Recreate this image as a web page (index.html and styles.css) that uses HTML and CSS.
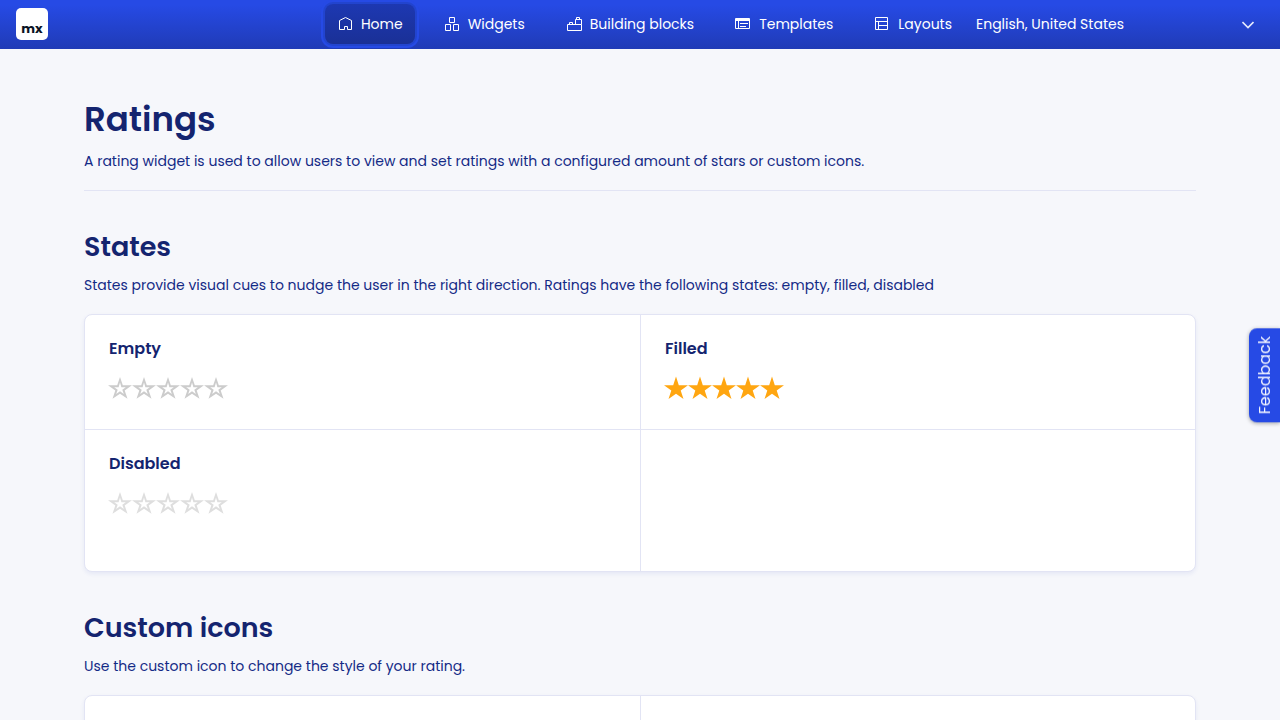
FILE: index.html
```html
<!DOCTYPE html>
<html lang="en">
<head>
<meta charset="utf-8">
<title>Ratings</title>
<link rel="stylesheet" href="styles.css">
</head>
<body>
<svg class="sprite" aria-hidden="true">
  <symbol id="star-empty" viewBox="0 0 24 24"><path fill-rule="evenodd" d="M12 1 L14.8 9.2 H24 L16.7 14.4 L19.5 22.8 L12 17.7 L4.5 22.8 L7.3 14.4 L0 9.2 H9.2 Z M12 6.6 L10.6 11.2 H6.2 L9.7 13.7 L8.2 18 L12 15.3 L15.8 18 L14.3 13.7 L17.8 11.2 H13.4 Z"/></symbol>
  <symbol id="star-full" viewBox="0 0 24 24"><path d="M12 .5 L14.8 9.2 H24 L16.7 14.4 L19.5 23 L12 17.7 L4.5 23 L7.3 14.4 L0 9.2 H9.2 Z"/></symbol>
</svg>
<header class="topbar">
  <a class="logo" href="#" aria-label="Home page"><span class="logo-text">mx</span></a>
  <nav class="menu">
    <a class="menu-link active" href="#"><svg class="icon" viewBox="0 0 16 16"><path d="M2.5 13.5V4.5L8.5 1.5L14.5 4.5V13.5H10.5V10.5H7.5V13.5Z"/></svg>Home</a>
    <a class="menu-link" href="#"><svg class="icon" viewBox="0 0 16 16"><path d="M5.5 1.5H10.5V6.5H5.5ZM1.5 8.5H6.5V14.5H1.5ZM9.5 8.5H14.5V14.5H9.5Z"/></svg>Widgets</a>
    <a class="menu-link" href="#"><svg class="icon" viewBox="0 0 16 16"><path d="M1.5 14.5V8.5H15.5V14.5ZM3.5 8.5V6.5H6.5V8.5M9.5 8.5V3.5H15.5V8.5M10.5 3.5V1.5H13.5V3.5"/></svg>Building blocks</a>
    <a class="menu-link" href="#"><svg class="icon" viewBox="0 0 16 16"><path d="M.5 2.5H14.5V12.5H.5ZM.5 3.5H14.5M.5 4.5H14.5M3.5 4.5V12.5M5 7.5H13M5 10.5H11"/></svg>Templates</a>
    <a class="menu-link" href="#"><svg class="icon" viewBox="0 0 16 16"><path d="M1.5 1.5H13.5V13.5H1.5ZM1.5 5.5H13.5M4.5 5.5V13.5M4.5 9.5H13.5"/></svg>Layouts</a>
  </nav>
  <div class="language">
    <select class="language-select" aria-label="Language"><option>English, United States</option></select>
    <svg class="chevron" viewBox="0 0 12 8"><path d="M.5 1L6 6.5L11.5 1"/></svg>
  </div>
</header>
<main class="page">
  <section class="intro">
    <h1 class="title">Ratings</h1>
    <p class="text">A rating widget is used to allow users to view and set ratings with a configured amount of stars or custom icons.</p>
  </section>
  <section class="section">
    <h2 class="heading">States</h2>
    <p class="text">States provide visual cues to nudge the user in the right direction. Ratings have the following states: empty, filled, disabled</p>
    <div class="card">
      <div class="cell">
        <h3 class="label">Empty</h3>
        <div class="rating" role="group" aria-label="Empty rating">
          <button class="star" aria-label="1 star"><svg><use href="#star-empty"/></svg></button>
          <button class="star" aria-label="2 stars"><svg><use href="#star-empty"/></svg></button>
          <button class="star" aria-label="3 stars"><svg><use href="#star-empty"/></svg></button>
          <button class="star" aria-label="4 stars"><svg><use href="#star-empty"/></svg></button>
          <button class="star" aria-label="5 stars"><svg><use href="#star-empty"/></svg></button>
        </div>
      </div>
      <div class="cell">
        <h3 class="label">Filled</h3>
        <div class="rating filled" role="group" aria-label="Filled rating">
          <button class="star" aria-label="1 star"><svg><use href="#star-full"/></svg></button>
          <button class="star" aria-label="2 stars"><svg><use href="#star-full"/></svg></button>
          <button class="star" aria-label="3 stars"><svg><use href="#star-full"/></svg></button>
          <button class="star" aria-label="4 stars"><svg><use href="#star-full"/></svg></button>
          <button class="star" aria-label="5 stars"><svg><use href="#star-full"/></svg></button>
        </div>
      </div>
      <div class="cell last">
        <h3 class="label">Disabled</h3>
        <div class="rating disabled" role="group" aria-label="Disabled rating">
          <button class="star" disabled aria-label="1 star"><svg><use href="#star-empty"/></svg></button>
          <button class="star" disabled aria-label="2 stars"><svg><use href="#star-empty"/></svg></button>
          <button class="star" disabled aria-label="3 stars"><svg><use href="#star-empty"/></svg></button>
          <button class="star" disabled aria-label="4 stars"><svg><use href="#star-empty"/></svg></button>
          <button class="star" disabled aria-label="5 stars"><svg><use href="#star-empty"/></svg></button>
        </div>
      </div>
      <div class="cell last"></div>
    </div>
  </section>
  <section class="section">
    <h2 class="heading">Custom icons</h2>
    <p class="text">Use the custom icon to change the style of your rating.</p>
    <div class="card">
      <div class="cell last"></div>
      <div class="cell last"></div>
    </div>
  </section>
</main>
<button class="feedback">Feedback</button>
</body>
</html>
```
FILE: styles.css
```css
* { box-sizing: border-box; }
html { scrollbar-width: none; }
body {
  margin: 0;
  background: #f6f7fb;
  color: #142a86;
  font: 14px/20px Poppins, Inter, "Open Sans", sans-serif;
}
h1, h2, h3, p { margin: 0; }
.sprite { position: absolute; width: 0; height: 0; }
.topbar {
  display: flex;
  align-items: center;
  height: 49px;
  padding: 0 16px 1px;
  background: linear-gradient(#264ae5 10%, #203bb6);
}
.logo {
  display: flex;
  align-items: flex-end;
  justify-content: center;
  width: 32px;
  height: 32px;
  padding-bottom: 4px;
  border-radius: 5px;
  background: #fff;
  color: #0a1325;
  text-decoration: none;
}
.logo-text { font-size: 13px; font-weight: 700; line-height: 14px; }
.menu { display: flex; gap: 17px; margin-left: auto; }
.menu-link {
  display: flex;
  align-items: center;
  gap: 8px;
  height: 40px;
  padding: 0 12px;
  border-radius: 8px;
  color: #fff;
  text-decoration: none;
  white-space: nowrap;
}
.menu-link.active {
  background: linear-gradient(#1d38b2, #1a3096);
  box-shadow: 0 0 0 2px #2244cf, 0 0 0 4px #264ae5;
}
.icon { width: 16px; height: 16px; fill: none; stroke: #fff; stroke-width: 1; }
.language { display: flex; align-items: center; width: 300px; padding: 0 10px 0 12px; }
.language-select {
  flex: 1;
  padding: 0;
  border: 0;
  appearance: none;
  background: transparent;
  color: #fff;
  font: inherit;
}
.chevron { width: 12px; height: 8px; margin-top: 2px; fill: none; stroke: #e4e9fc; stroke-width: 1.6; }
.page { max-width: 1160px; margin: 0 auto; padding: 49px 24px 48px; }
.intro { padding-bottom: 19px; border-bottom: 1px solid #e2e4f4; }
.title { margin-bottom: 11px; font-size: 34px; line-height: 42px; font-weight: 600; color: #14246f; }
.section { padding-top: 40px; }
.heading { margin-bottom: 12px; font-size: 27px; line-height: 32px; font-weight: 600; color: #14246f; }
.card {
  display: grid;
  grid-template-columns: 1fr 1fr;
  margin-top: 19px;
  border: 1px solid #e2e4f4;
  border-radius: 8px;
  background: #fff;
  box-shadow: 0 2px 4px rgba(32, 59, 182, .08);
}
.cell { padding: 24px 24px 29px; border-bottom: 1px solid #e2e4f4; }
.cell:nth-child(even) { border-left: 1px solid #e2e4f4; }
.cell.last { min-height: 141px; border-bottom: 0; }
.label { margin-bottom: 17px; font-size: 16px; line-height: 20px; font-weight: 600; color: #14246f; }
.rating { display: flex; margin-left: -1px; color: #ccc; }
.rating.filled { color: #ffa611; }
.rating.disabled { color: #dedede; }
.star { width: 24px; height: 24px; padding: 0; border: 0; background: none; color: inherit; }
.star svg { display: block; width: 24px; height: 24px; fill: currentColor; }
.feedback {
  position: fixed;
  right: 0;
  top: 328px;
  padding: 8px 6px 8px 5px;
  border: 0;
  border-radius: 0 8px 8px 0;
  background: #264ae5;
  box-shadow: 0 -1px 4px rgba(0, 0, 0, .35);
  color: #f1f4ff;
  font: 16px/20px Poppins, Inter, sans-serif;
  writing-mode: vertical-rl;
  transform: rotate(180deg);
}
```
